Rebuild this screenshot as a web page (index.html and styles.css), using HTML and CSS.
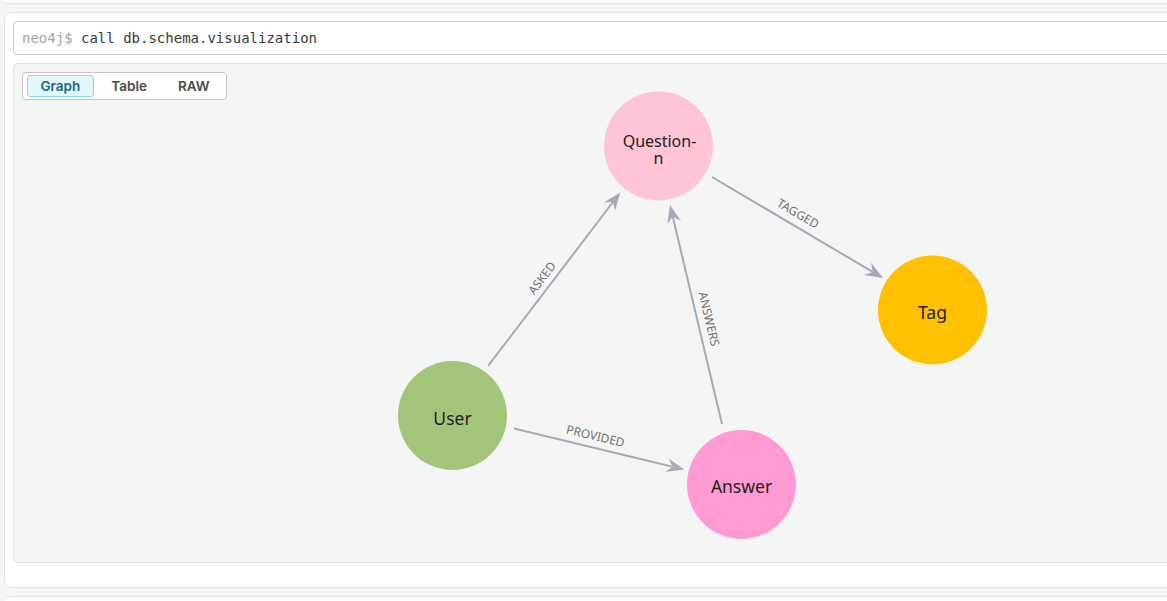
FILE: index.html
```html
<!DOCTYPE html>
<html>
<head>
<meta charset="utf-8">
<link rel="stylesheet" href="styles.css">
</head>
<body>
<div class="stub top"></div>
<section class="card">
  <div class="cmd"><span class="prompt">neo4j$</span> call db.schema.visualization</div>
  <div class="graph">
    <div class="tabs">
      <span class="tab active">Graph</span>
      <span class="tab">Table</span>
      <span class="tab">RAW</span>
    </div>
    <svg class="canvas" width="1200" height="498" xmlns="http://www.w3.org/2000/svg">
      <g transform="translate(-14 -64)">
        <g class="edge" transform="translate(488.3 365.7) rotate(-52.7)">
          <line x1="0" y1="0" x2="205.8" y2="0"/>
          <polygon points="217.8,0 199.8,7 205.8,0 199.8,-7"/>
        </g>
        <g class="edge" transform="translate(722 424) rotate(-103.36)">
          <line x1="0" y1="0" x2="213.1" y2="0"/>
          <polygon points="225.1,0 207.1,7 213.1,0 207.1,-7"/>
        </g>
        <g class="edge" transform="translate(712 177) rotate(30.57)">
          <line x1="0" y1="0" x2="186.6" y2="0"/>
          <polygon points="198.6,0 180.6,7 186.6,0 180.6,-7"/>
        </g>
        <g class="edge" transform="translate(514 428.5) rotate(13.54)">
          <line x1="0" y1="0" x2="163.2" y2="0"/>
          <polygon points="175.2,0 157.2,7 163.2,0 157.2,-7"/>
        </g>

        <text class="elabel" transform="translate(542 278) rotate(-52.7)" y="4.3">ASKED</text>
        <text class="elabel" transform="translate(709 319) rotate(76.64)" y="4.3">ANSWERS</text>
        <text class="elabel" transform="translate(798 213.5) rotate(30.57)" y="4.3">TAGGED</text>
        <text class="elabel" transform="translate(595.5 436) rotate(13.54)" y="4.3">PROVIDED</text>

        <circle class="n-question" cx="658.5" cy="146" r="54.5"/>
        <text class="nlabel small"><tspan x="659.5" y="146.5">Question-</tspan><tspan x="658.5" y="164">n</tspan></text>

        <circle class="n-tag" cx="932.5" cy="310" r="54.5"/>
        <text class="nlabel" x="932.5" y="318.5">Tag</text>

        <circle class="n-user" cx="452.5" cy="415.5" r="54.5"/>
        <text class="nlabel" x="452.5" y="424.5">User</text>

        <circle class="n-answer" cx="741.5" cy="484.5" r="54.5"/>
        <text class="nlabel" x="741.5" y="493">Answer</text>
      </g>
    </svg>
  </div>
</section>
<div class="stub next"></div>
</body>
</html>
```

FILE: styles.css
```css
html, body {
  margin: 0;
  padding: 0;
  overflow: hidden;
  background: #f4f5f5;
  font-family: "Noto Sans", "Open Sans", sans-serif;
}

.stub {
  margin-left: 4px;
  width: 1200px;
  background: #ffffff;
  box-sizing: border-box;
}

.stub.top {
  height: 4px;
  border-bottom: 1px solid #e0e1e1;
  border-bottom-left-radius: 6px;
}

.stub.next {
  height: 40px;
  margin-top: 8px;
  border-top: 1px solid #e0e1e1;
  border-top-left-radius: 6px;
}

.card {
  margin: 8px 0 0 4px;
  width: 1200px;
  box-sizing: border-box;
  background: #ffffff;
  border: 1px solid #e0e1e1;
  border-radius: 7px;
  padding: 8px 0 24px 8px;
  display: flex;
  flex-direction: column;
  gap: 8px;
}

.cmd {
  height: 34px;
  box-sizing: border-box;
  border: 1px solid #c9cbcc;
  border-radius: 4px;
  padding: 0 8px;
  display: flex;
  align-items: center;
  font-family: "DejaVu Sans Mono", "Liberation Mono", monospace;
  font-size: 14px;
  color: #3a3a3a;
  white-space: pre;
}

.prompt {
  color: #a3a3a3;
}

.graph {
  position: relative;
  height: 500px;
  box-sizing: border-box;
  border: 1px solid #dfe0e0;
  border-radius: 5px;
  background: #f4f6f6;
  padding: 8px;
}

.tabs {
  display: inline-flex;
  gap: 4px;
  padding: 2px 3px 2px 4px;
  height: 28px;
  box-sizing: border-box;
  background: #ffffff;
  border: 1px solid #c4c7c9;
  border-radius: 4px;
  position: relative;
  z-index: 1;
}

.tab {
  display: flex;
  align-items: center;
  padding: 0 12.5px;
  height: 22px;
  box-sizing: border-box;
  border: 1px solid transparent;
  border-radius: 3px;
  font-family: Inter, "Open Sans", sans-serif;
  font-weight: 600;
  font-size: 13.5px;
  color: #4b4b4b;
}

.tab.active {
  background: #e3f7fb;
  border-color: #86d9e9;
  color: #1d6688;
}

.canvas {
  position: absolute;
  left: 0;
  top: 0;
}

.edge line {
  stroke: #a5abb6;
  stroke-width: 2;
}

.edge polygon {
  fill: #a5abb6;
}

.elabel {
  font-family: "Noto Sans", "Open Sans", sans-serif;
  font-size: 12px;
  fill: #707070;
  text-anchor: middle;
}

.nlabel {
  font-family: "Noto Sans", "Open Sans", sans-serif;
  font-size: 17.5px;
  fill: #222222;
  text-anchor: middle;
}

.nlabel.small {
  font-size: 16px;
}

.n-question { fill: #ffc4d6; }
.n-tag { fill: #ffc000; }
.n-user { fill: #a2c57a; }
.n-answer { fill: #ff9bd2; }
```
